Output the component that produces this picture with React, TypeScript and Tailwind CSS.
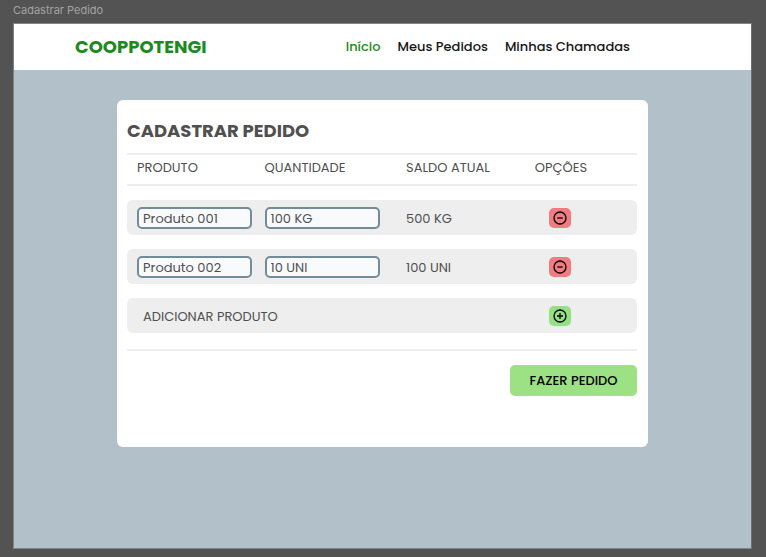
import { useState } from "react";

type Item = { id: number; produto: string; quantidade: string; saldo: string };

const initialItems: Item[] = [
  { id: 1, produto: "Produto 001", quantidade: "100 KG", saldo: "500 KG" },
  { id: 2, produto: "Produto 002", quantidade: "10 UNI", saldo: "100 UNI" },
];

function CircleIcon({ plus = false }: { plus?: boolean }) {
  return (
    <svg viewBox="0 0 14 14" className="size-3.5" fill="none" stroke="currentColor" strokeWidth="1.3" aria-hidden="true">
      <circle cx="7" cy="7" r="6" />
      <path d={plus ? "M4 7h6M7 4v6" : "M4.3 7h5.4"} />
    </svg>
  );
}

function Field({ label, value }: { label: string; value: string }) {
  return (
    <input
      aria-label={label}
      defaultValue={value}
      className="block h-[22px] w-full max-w-[115px] rounded-[5px] border-2 border-[#728c9a] bg-[#f8fafc] px-1 pt-0.5 text-[13px] text-[#505050] outline-none"
    />
  );
}

function IconButton({ label, plus = false, onClick }: { label: string; plus?: boolean; onClick: () => void }) {
  return (
    <button
      type="button"
      aria-label={label}
      onClick={onClick}
      className={`flex h-5 w-[22px] items-center justify-center rounded-[5px] text-black ${plus ? "bg-[#93e183]" : "bg-[#f17b7e]"}`}
    >
      <CircleIcon plus={plus} />
    </button>
  );
}

export default function App() {
  const [items, setItems] = useState(initialItems);

  const removeItem = (id: number) => setItems(items.filter((item) => item.id !== id));
  const addItem = () =>
    setItems([...items, { id: Date.now(), produto: "", quantidade: "", saldo: "" }]);

  return (
    <div className="flex min-h-screen flex-col bg-[#535353] pr-[14px] pb-2 pl-[13px] font-['Poppins','Inter',sans-serif] text-[#505050]">
      <p className="h-[23px] font-['Inter',sans-serif] text-[11px] leading-5 text-[#a3a3a3]">Cadastrar Pedido</p>

      <div className="flex flex-1 flex-col border border-[#7d8588] border-r-[#6b7073] bg-[#b2c0c9]">
        <header className="flex h-[46px] items-center justify-between bg-white pr-[121px] pl-[61px]">
          <a href="#" className="text-lg font-bold text-[#1d8a21]">COOPPOTENGI</a>
          <nav className="flex gap-[17px] text-[13px] font-medium whitespace-nowrap text-[#161616]">
            <a href="#" className="text-[#1d8a21]">Início</a>
            <a href="#">Meus Pedidos</a>
            <a href="#">Minhas Chamadas</a>
          </nav>
        </header>

        <main className="mx-auto mt-[30px] mb-8 min-h-[347px] w-full max-w-[531px] rounded-md bg-white pt-[23px] pr-[11px] pl-[10px]">
          <h1 className="text-lg leading-4 font-bold">CADASTRAR PEDIDO</h1>

          <table className="w-full table-fixed border-separate border-spacing-x-0 border-spacing-y-[14px] text-left text-[13px]">
            <thead>
              <tr className="h-[33px] *:border-y-2 *:border-[#eeeeee] *:px-0 *:pt-0 *:pb-1 *:font-normal">
                <th scope="col" className="w-1/4"><span className="pl-[10px]">PRODUTO</span></th>
                <th scope="col" className="w-1/4"><span className="pl-[10px]">QUANTIDADE</span></th>
                <th scope="col" className="w-[28%]"><span className="pl-6">SALDO ATUAL</span></th>
                <th scope="col"><span className="pl-[10px]">OPÇÕES</span></th>
              </tr>
            </thead>
            <tbody>
              {items.map((item) => (
                <tr key={item.id} className="h-[35px] *:bg-[#eeeeee] *:pr-0 *:pb-0">
                  <td className="rounded-l-md pt-0 pl-[10px]"><Field label="Produto" value={item.produto} /></td>
                  <td className="pt-0 pl-[10px]"><Field label="Quantidade" value={item.quantidade} /></td>
                  <td className="pt-0.5 pl-6">{item.saldo}</td>
                  <td className="rounded-r-md pt-0 pl-6">
                    <IconButton label="Remover produto" onClick={() => removeItem(item.id)} />
                  </td>
                </tr>
              ))}
              <tr className="h-[35px] *:bg-[#eeeeee] *:pr-0 *:pb-0">
                <td colSpan={3} className="rounded-l-md pt-0.5 pl-4">ADICIONAR PRODUTO</td>
                <td className="rounded-r-md pt-0 pl-6">
                  <IconButton plus label="Adicionar produto" onClick={addItem} />
                </td>
              </tr>
            </tbody>
          </table>

          <div className="mt-0.5 flex justify-end border-t-2 border-[#eeeeee] pt-[14px]">
            <button type="button" className="h-[31px] w-[127px] rounded-[5px] bg-[#9ce184] text-[13px] font-medium text-black">
              FAZER PEDIDO
            </button>
          </div>
        </main>
      </div>
    </div>
  );
}
